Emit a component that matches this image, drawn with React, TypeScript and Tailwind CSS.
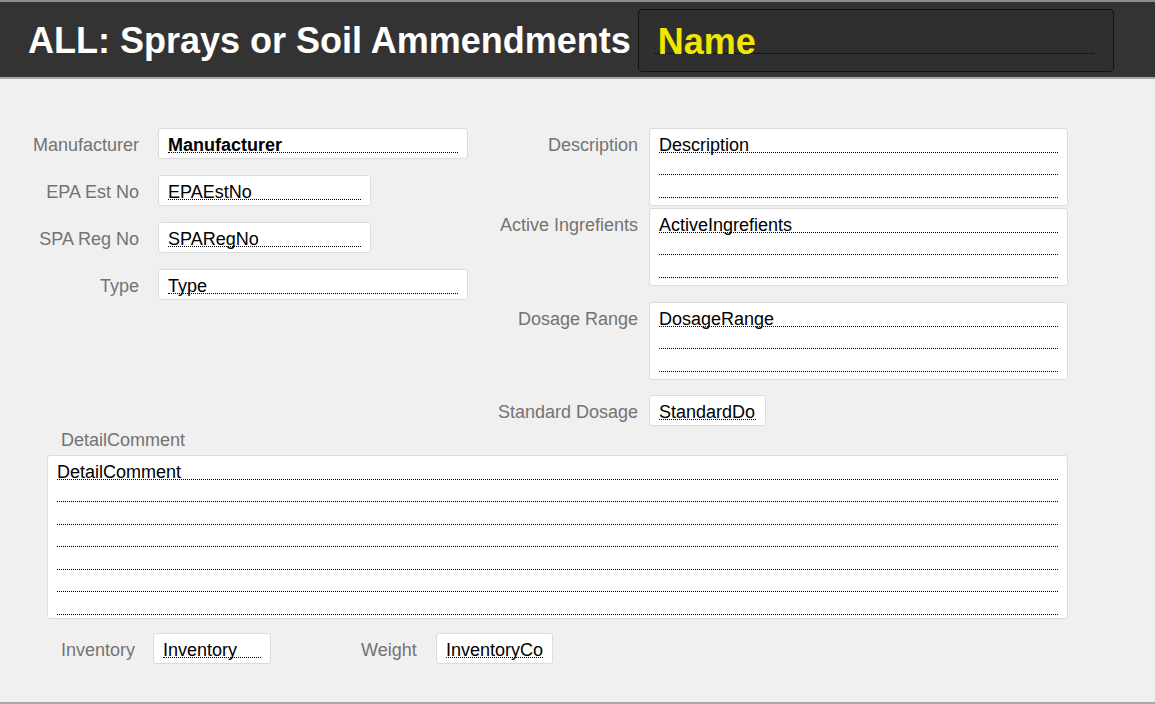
import React from "react";

const Row = ({ text, bold }: { text?: string; bold?: boolean }) => (
  <div className="h-[22.5px] border-b border-dotted border-black">
    <span className={"block pt-[6px] leading-[18px] text-[18px] whitespace-nowrap text-black " + (bold ? "font-bold" : "")}>
      {text ?? "\u00a0"}
    </span>
  </div>
);

const Box = ({ lines, text, bold, w, h }: { lines: number; text: string; bold?: boolean; w: string; h: string }) => (
  <div className={"bg-white border border-[#dcdcdc] rounded-[3px] px-[9px] pt-[1px] overflow-hidden " + w + " " + h}>
    {Array.from({ length: lines }).map((_, i) => (
      <Row key={i} text={i === 0 ? text : undefined} bold={bold && i === 0} />
    ))}
  </div>
);

const LeftField = ({ label, text, bold, w }: { label: string; text: string; bold?: boolean; w: string }) => (
  <div className="flex items-start">
    <div className="w-[139px] text-right text-[18px] leading-[18px] pt-[8px] text-[#737373] whitespace-nowrap">{label}</div>
    <div className="ml-[19px]">
      <Box lines={1} text={text} bold={bold} w={w} h="h-[31px]" />
    </div>
  </div>
);

const RightField = ({ label, text, lines, w, h, mt }: { label: string; text: string; lines: number; w: string; h: string; mt: string }) => (
  <div className={"flex items-start " + mt}>
    <div className="w-[148px] text-right text-[18px] leading-[18px] pt-[8px] text-[#737373] whitespace-nowrap">{label}</div>
    <div className="ml-[11px]">
      <Box lines={lines} text={text} w={w} h={h} />
    </div>
  </div>
);

export default function App() {
  return (
    <div className="w-[1155px] h-[704px] bg-[#f0f0f0] flex flex-col font-['Liberation_Sans',Arial,sans-serif] overflow-hidden">
      <div className="h-[79px] shrink-0 bg-[#333333] border-t-2 border-b-2 border-t-[#8c8c8c] border-b-[#a8a8a8] flex items-start">
        <div className="pl-[28px] pt-[21px] leading-[36px] text-[36px] font-bold text-white whitespace-nowrap">
          ALL: Sprays or Soil Ammendments
        </div>
        <div className="ml-[7px] mt-[7px] w-[476px] h-[63px] border border-[#111111] rounded-[4px] bg-[#2f2f2f] pt-[13px] pl-[16px] pr-[19px]">
          <div className="h-[31px] border-b border-dotted border-black">
            <span className="block pl-[3px] pt-[1px] leading-[36px] text-[36px] font-bold text-[#f0e600]">Name</span>
          </div>
        </div>
      </div>
      <div className="flex-1 border-b-2 border-[#a9a9a9] pt-[49px]">
        <div className="flex">
          <div className="w-[490px] flex flex-col gap-[16px]">
            <LeftField label="Manufacturer" text="Manufacturer" bold w="w-[310px]" />
            <LeftField label="EPA Est No" text="EPAEstNo" w="w-[213px]" />
            <LeftField label="SPA Reg No" text="SPARegNo" w="w-[213px]" />
            <LeftField label="Type" text="Type" w="w-[310px]" />
          </div>
          <div className="flex flex-col">
            <RightField label="Description" text="Description" lines={3} w="w-[419px]" h="h-[78px]" mt="" />
            <RightField label="Active Ingrefients" text="ActiveIngrefients" lines={3} w="w-[419px]" h="h-[78px]" mt="mt-[2px]" />
            <RightField label="Dosage Range" text="DosageRange" lines={3} w="w-[419px]" h="h-[78px]" mt="mt-[16px]" />
            <RightField label="Standard Dosage" text="StandardDo" lines={1} w="w-[117px]" h="h-[31px]" mt="mt-[15px]" />
          </div>
        </div>
        <div className="ml-[61px] h-[29px] pt-[5px] leading-[18px] text-[18px] text-[#737373]">DetailComment</div>
        <div className="ml-[47px]">
          <Box lines={7} text="DetailComment" w="w-[1021px]" h="h-[164px]" />
        </div>
        <div className="flex items-start mt-[14px] ml-[61px]">
          <div className="w-[92px] text-[18px] leading-[18px] pt-[8px] text-[#737373]">Inventory</div>
          <Box lines={1} text="Inventory" w="w-[118px]" h="h-[31px]" />
          <div className="ml-[90px] w-[75px] text-[18px] leading-[18px] pt-[8px] text-[#737373]">Weight</div>
          <Box lines={1} text="InventoryCo" w="w-[117px]" h="h-[31px]" />
        </div>
      </div>
    </div>
  );
}
